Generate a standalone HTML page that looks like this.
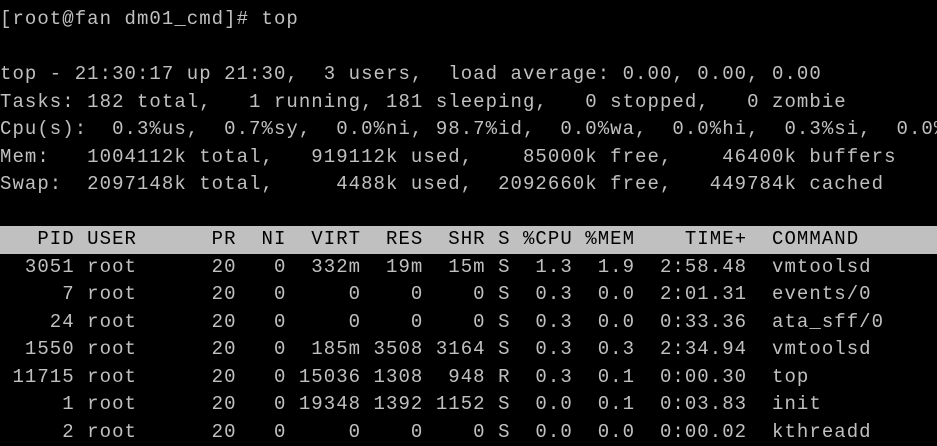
<!DOCTYPE html>
<html><head><meta charset="utf-8"><style>
html,body{margin:0;padding:0;background:#000;width:937px;height:429px;overflow:hidden}
.t{position:absolute;left:0;top:6px;width:937px}
.l{height:27.5px;line-height:27.5px;white-space:pre;font-family:"Liberation Mono",monospace;font-size:19px;letter-spacing:1.05px;color:#c0c0c0}
.h{background:#c0c0c0;color:#000}
</style></head><body><div class="t">
<div class="l">[root@fan dm01_cmd]# top</div>
<div class="l"> </div>
<div class="l">top - 21:30:17 up 21:30,  3 users,  load average: 0.00, 0.00, 0.00</div>
<div class="l">Tasks: 182 total,   1 running, 181 sleeping,   0 stopped,   0 zombie</div>
<div class="l">Cpu(s):  0.3%us,  0.7%sy,  0.0%ni, 98.7%id,  0.0%wa,  0.0%hi,  0.3%si,  0.0%st</div>
<div class="l">Mem:   1004112k total,   919112k used,    85000k free,    46400k buffers</div>
<div class="l">Swap:  2097148k total,     4488k used,  2092660k free,   449784k cached</div>
<div class="l"> </div>
<div class="l h">   PID USER      PR  NI  VIRT  RES  SHR S %CPU %MEM    TIME+  COMMAND</div>
<div class="l">  3051 root      20   0  332m  19m  15m S  1.3  1.9  2:58.48  vmtoolsd</div>
<div class="l">     7 root      20   0     0    0    0 S  0.3  0.0  2:01.31  events/0</div>
<div class="l">    24 root      20   0     0    0    0 S  0.3  0.0  0:33.36  ata_sff/0</div>
<div class="l">  1550 root      20   0  185m 3508 3164 S  0.3  0.3  2:34.94  vmtoolsd</div>
<div class="l"> 11715 root      20   0 15036 1308  948 R  0.3  0.1  0:00.30  top</div>
<div class="l">     1 root      20   0 19348 1392 1152 S  0.0  0.1  0:03.83  init</div>
<div class="l">     2 root      20   0     0    0    0 S  0.0  0.0  0:00.02  kthreadd</div>
</div></body></html>
